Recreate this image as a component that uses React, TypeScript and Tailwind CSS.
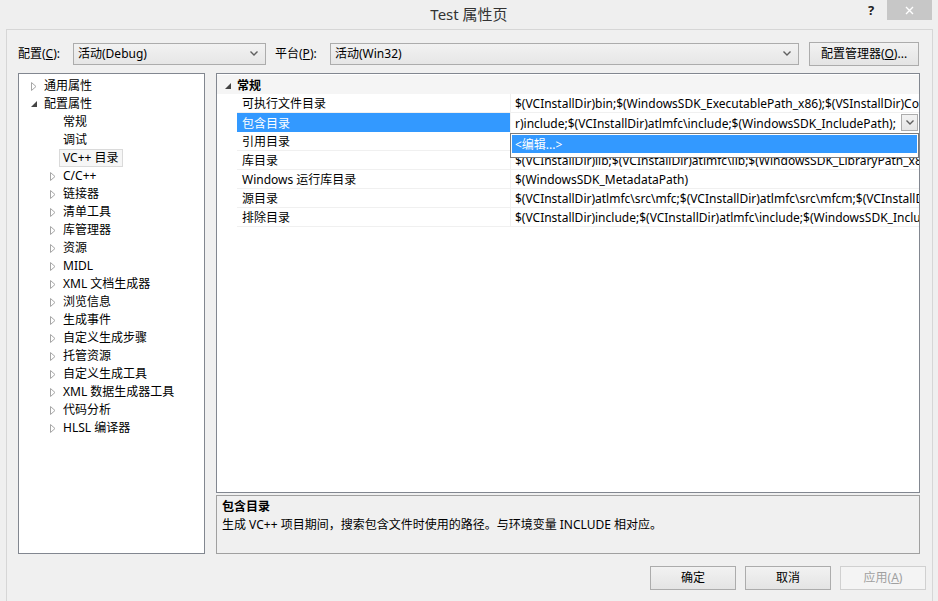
import React from "react";

const Chevron = () => (
  <svg width="8" height="5" viewBox="0 0 8 5" className="block">
    <path d="M0.5 0.5 L4 4 L7.5 0.5" fill="none" stroke="#606060" strokeWidth="1.4" />
  </svg>
);

const Collapsed = () => (
  <svg width="6" height="9" viewBox="0 0 6 9" className="block">
    <polygon points="0.5,0.5 5,4.5 0.5,8.5" fill="#fff" stroke="#a6a6a6" strokeWidth="1" />
  </svg>
);

const Expanded = () => (
  <svg width="6" height="6" viewBox="0 0 6 6" className="block">
    <polygon points="6,0 6,6 0,6" fill="#444" />
  </svg>
);

type TreeItem = { label: string; level: 0 | 1; state: "c" | "e" | "n"; sel?: boolean };

const tree: TreeItem[] = [
  { label: "通用属性", level: 0, state: "c" },
  { label: "配置属性", level: 0, state: "e" },
  { label: "常规", level: 1, state: "n" },
  { label: "调试", level: 1, state: "n" },
  { label: "VC++ 目录", level: 1, state: "n", sel: true },
  { label: "C/C++", level: 1, state: "c" },
  { label: "链接器", level: 1, state: "c" },
  { label: "清单工具", level: 1, state: "c" },
  { label: "库管理器", level: 1, state: "c" },
  { label: "资源", level: 1, state: "c" },
  { label: "MIDL", level: 1, state: "c" },
  { label: "XML 文档生成器", level: 1, state: "c" },
  { label: "浏览信息", level: 1, state: "c" },
  { label: "生成事件", level: 1, state: "c" },
  { label: "自定义生成步骤", level: 1, state: "c" },
  { label: "托管资源", level: 1, state: "c" },
  { label: "自定义生成工具", level: 1, state: "c" },
  { label: "XML 数据生成器工具", level: 1, state: "c" },
  { label: "代码分析", level: 1, state: "c" },
  { label: "HLSL 编译器", level: 1, state: "c" },
];

const props: { name: string; value: string; sel?: boolean }[] = [
  { name: "可执行文件目录", value: "$(VCInstallDir)bin;$(WindowsSDK_ExecutablePath_x86);$(VSInstallDir)Common7\\Tools\\bin;$(VSInstallDir)Common7\\tools;" },
  { name: "包含目录", value: "r)include;$(VCInstallDir)atlmfc\\include;$(WindowsSDK_IncludePath);", sel: true },
  { name: "引用目录", value: "$(VCInstallDir)atlmfc\\lib;$(VCInstallDir)lib" },
  { name: "库目录", value: "$(VCInstallDir)lib;$(VCInstallDir)atlmfc\\lib;$(WindowsSDK_LibraryPath_x86);" },
  { name: "Windows 运行库目录", value: "$(WindowsSDK_MetadataPath)" },
  { name: "源目录", value: "$(VCInstallDir)atlmfc\\src\\mfc;$(VCInstallDir)atlmfc\\src\\mfcm;$(VCInstallDir)atlmfc\\src\\atl;$(VCInstallDir)crt\\src;" },
  { name: "排除目录", value: "$(VCInstallDir)include;$(VCInstallDir)atlmfc\\include;$(WindowsSDK_IncludePath);$(MSBuild_ExecutablePath);" },
];

function Combo({ text, w }: { text: string; w: string }) {
  return (
    <div className={`${w} h-[22px] border border-[#acacac] bg-gradient-to-b from-[#f2f2f2] to-[#e6e6e6] flex items-center pl-[4px] pr-[7px]`}>
      <span className="flex-1 whitespace-nowrap">{text}</span>
      <Chevron />
    </div>
  );
}

function Btn({ children, w, disabled }: { children: React.ReactNode; w: string; disabled?: boolean }) {
  return (
    <div
      className={`${w} h-[24px] border ${disabled ? "border-[#d0d0d0] text-[#a0a0a0] bg-[#f4f4f4]" : "border-[#acacac] bg-gradient-to-b from-[#f2f2f2] to-[#e4e4e4] text-black"} flex items-center justify-center whitespace-nowrap`}
    >
      {children}
    </div>
  );
}

export default function App() {
  return (
    <div className="w-[938px] h-[601px] bg-[#efefef] flex flex-col text-[12px] leading-[18px] text-black font-[family-name:Noto_Sans,Noto_Sans_CJK_SC,sans-serif] overflow-hidden">
      {/* title bar */}
      <div className="h-[29px] relative flex items-start justify-center">
        <span className="mt-[4px] text-[15px] leading-[20px] text-[#333]">Test 属性页</span>
        <span className="absolute left-[868px] top-[1px] text-[13px] font-bold text-[#222]">?</span>
        <div className="absolute left-[887px] top-0 w-[45px] h-[20px] bg-[#c7c7c7] flex items-center justify-center">
          <svg width="9" height="9" viewBox="0 0 9 9">
            <path d="M1 1 L8 8 M8 1 L1 8" stroke="#fff" strokeWidth="1.4" />
          </svg>
        </div>
      </div>

      {/* frame */}
      <div className="ml-[6px] w-[927px] flex-1 border-l border-t border-r border-[#d6d6d6] bg-[#f0f0f0] flex flex-col pl-[11px]">
        {/* config row */}
        <div className="mt-[12px] h-[23px] flex items-center">
          <span className="w-[55px]">
            配置(<span className="underline">C</span>):
          </span>
          <Combo text="活动(Debug)" w="w-[193px]" />
          <span className="ml-[9px] w-[55px]">
            平台(<span className="underline">P</span>):
          </span>
          <Combo text="活动(Win32)" w="w-[469px]" />
          <div className="ml-[10px]">
            <Btn w="w-[110px]">
              配置管理器(<span className="underline">O</span>)...
            </Btn>
          </div>
        </div>

        {/* main */}
        <div className="mt-[8px] flex h-[481px]">
          {/* tree */}
          <div className="w-[187px] h-full bg-white border border-[#828790] pt-[3px]">
            {tree.map((t, i) => (
              <div key={i} className={`h-[18px] flex items-center ${t.level === 0 ? "pl-[12px]" : "pl-[31px]"}`}>
                <div className="w-[13px] flex items-center">
                  {t.state === "c" && <Collapsed />}
                  {t.state === "e" && <Expanded />}
                </div>
                {t.sel ? (
                  <span className="-ml-[4px] px-[3px] border border-[#dadada] bg-[#f6f6f6] leading-[16px] whitespace-nowrap">{t.label}</span>
                ) : (
                  <span className="whitespace-nowrap">{t.label}</span>
                )}
              </div>
            ))}
          </div>

          {/* right */}
          <div className="ml-[11px] w-[704px] flex flex-col">
            <div className="h-[421px] bg-white border border-[#828790] relative overflow-hidden pt-[1px]">
              {/* header */}
              <div className="h-[19px] flex items-center bg-[#f5f5f5] pt-[2px]">
                <div className="w-[20px] flex justify-center pl-[2px]">
                  <Expanded />
                </div>
                <span className="font-bold">常规</span>
              </div>
              {props.map((p, i) => (
                <div key={i} className="h-[19px] flex">
                  <div className="w-[20px] shrink-0 bg-white" />
                  <div
                    className={`w-[273px] shrink-0 pl-[5px] pt-[2px] flex items-center whitespace-nowrap ${p.sel ? "bg-[#3399ff] text-white" : "border-b border-[#f0f0f0]"}`}
                  >
                    {p.name}
                  </div>
                  <div className="w-[1px] shrink-0 bg-[#f0f0f0]" />
                  <div className={`flex-1 min-w-0 flex items-center pl-[4px] overflow-hidden ${p.sel ? "" : "border-b border-[#f0f0f0]"}`}>
                    <span className="whitespace-nowrap flex-1 overflow-hidden pt-[2px]">{p.value}</span>
                    {p.sel && (
                      <div className="w-[17px] h-[17px] shrink-0 mr-[1px] border border-[#acacac] bg-gradient-to-b from-[#f2f2f2] to-[#e6e6e6] flex items-center justify-center">
                        <Chevron />
                      </div>
                    )}
                  </div>
                </div>
              ))}

              {/* dropdown list */}
              <div className="absolute left-[293px] top-[59px] w-[409px] h-[25px] bg-white border border-[#7a7a7a] p-[1px]">
                <div className="h-[18px] bg-[#3399ff] text-white pl-[3px] pt-[1px] flex items-center">&lt;编辑...&gt;</div>
              </div>
            </div>

            {/* description */}
            <div className="mt-[2px] h-[59px] border border-[#a0a0a0] bg-[#f0f0f0] pl-[5px] pt-[2px]">
              <div className="font-bold">包含目录</div>
              <div>生成 VC++ 项目期间，搜索包含文件时使用的路径。与环境变量 INCLUDE 相对应。</div>
            </div>
          </div>
        </div>

        {/* buttons */}
        <div className="mt-[12px] flex pl-[632px] gap-[9px]">
          <Btn w="w-[86px]">确定</Btn>
          <Btn w="w-[86px]">取消</Btn>
          <Btn w="w-[86px]" disabled>
            应用(<span className="underline">A</span>)
          </Btn>
        </div>
      </div>
    </div>
  );
}
